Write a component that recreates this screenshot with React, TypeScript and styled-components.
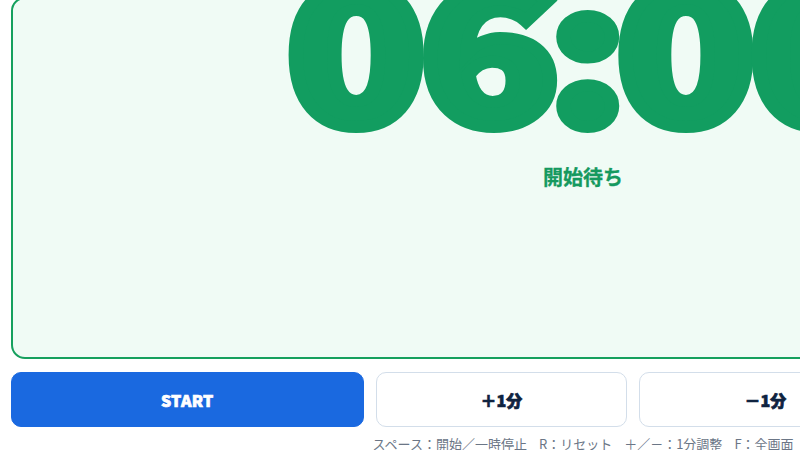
import React from "react";
import styled, { createGlobalStyle } from "styled-components";

const GlobalStyle = createGlobalStyle`
  html, body {
    margin: 0;
    padding: 0;
    background: #ffffff;
    overflow: hidden;
  }
  body {
    font-family: "Noto Sans CJK JP", "Noto Sans", sans-serif;
  }
  * { box-sizing: border-box; }
`;

const Page = styled.div`
  height: 100vh;
  display: flex;
  flex-direction: column;
  justify-content: center;
  align-items: flex-start;
  padding: 0 11px;
  overflow: hidden;
`;

const Content = styled.div`
  width: 1144px;
  flex-shrink: 0;
  display: flex;
  flex-direction: column;
`;

const Panel = styled.section`
  height: 362px;
  flex-shrink: 0;
  border: 2px solid #16a05e;
  border-radius: 14px;
  background: #f0fbf5;
  display: flex;
  flex-direction: column;
  align-items: center;
  justify-content: flex-end;
  padding-bottom: 166px;
`;

const TimeText = styled.div`
  font-size: 189px;
  line-height: 1;
  font-weight: 900;
  color: #129d60;
  -webkit-text-stroke: 12px #129d60;
  text-shadow: 0 0 1.5px rgba(190, 150, 90, 0.8);
  letter-spacing: -5px;
  padding-left: 2px;
  white-space: nowrap;
  transform: scaleX(1.21);
`;

const Colon = styled.span`
  margin: 0 -4.5px;
`;

const StatusLabel = styled.div`
  margin-top: 27px;
  font-size: 20px;
  line-height: 28px;
  font-weight: 700;
  color: #15995e;
  -webkit-text-stroke: 0.3px #15995e;
`;

const Controls = styled.div`
  margin-top: 13px;
  display: grid;
  grid-template-columns: 1.4fr 1fr 1fr 1fr;
  gap: 12px;
`;

const Button = styled.button<{ $primary?: boolean }>`
  height: 55px;
  border-radius: 10px;
  font-family: "Noto Sans CJK JP", "Noto Sans", sans-serif;
  font-size: 16px;
  font-weight: 900;
  cursor: pointer;
  border: 1px solid ${(p) => (p.$primary ? "#1a69e0" : "#d3deea")};
  background: ${(p) => (p.$primary ? "#1a69e0" : "#ffffff")};
  color: ${(p) => (p.$primary ? "#ffffff" : "#0f2340")};
  -webkit-text-stroke: 0.7px currentColor;
  letter-spacing: ${(p) => (p.$primary ? "0.3px" : "0")};
`;

const Hint = styled.div`
  margin-top: 8px;
  display: flex;
  justify-content: center;
  gap: 12px;
  font-size: 13px;
  line-height: 18px;
  color: #6b7686;
  white-space: nowrap;
`;

export default function App() {
  return (
    <>
      <GlobalStyle />
      <Page>
        <Content>
          <Panel>
            <TimeText>
              06<Colon>:</Colon>00
            </TimeText>
            <StatusLabel>開始待ち</StatusLabel>
          </Panel>
          <Controls>
            <Button $primary>START</Button>
            <Button>＋1分</Button>
            <Button>－1分</Button>
            <Button>RESET</Button>
          </Controls>
          <Hint>
            <span>スペース：開始／一時停止</span>
            <span>R：リセット</span>
            <span>＋／－：1分調整</span>
            <span>F：全画面</span>
          </Hint>
        </Content>
      </Page>
    </>
  );
}
